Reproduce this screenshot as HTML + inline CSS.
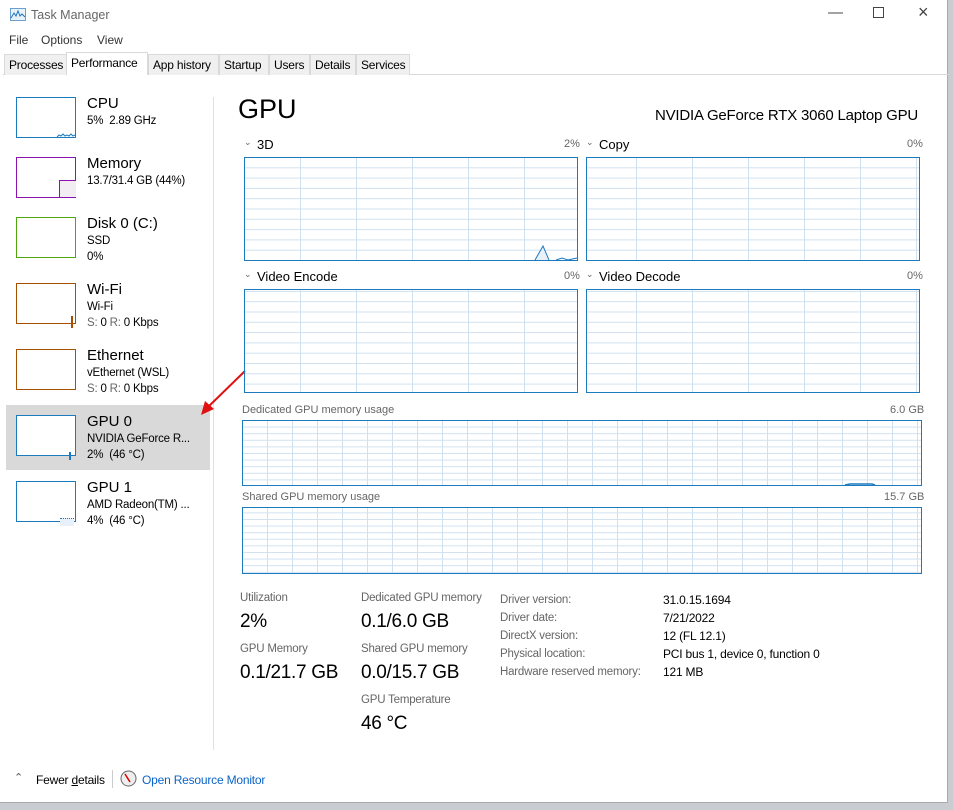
<!DOCTYPE html>
<html><head><meta charset="utf-8"><style>
*{margin:0;padding:0;box-sizing:border-box}
body{width:953px;height:810px;overflow:hidden;background:#c9ccd1;font-family:"Liberation Sans",sans-serif;font-size:12px;color:#000;position:relative}
.a{position:absolute;white-space:nowrap}
#win{position:absolute;left:0;top:0;width:948px;height:803px;background:#fff;border-right:1px solid #aaa;border-bottom:1px solid #aaa}
.tab{position:absolute;top:54px;height:21px;background:#f0f0f0;border:1px solid #d9d9d9;border-bottom:none;font-size:12px;padding:3px 4px 0;letter-spacing:-0.2px}
.th{position:absolute;left:16px;width:60px;height:41px;background:#fff}
.t1{position:absolute;left:87px;font-size:15px}
.t2{position:absolute;left:87px;font-size:11.5px;line-height:16px;letter-spacing:-0.2px}
.g{color:#666}
.lbl{font-size:11.5px;color:#666;letter-spacing:-0.2px}
.big{font-size:19px;letter-spacing:-0.3px}
</style></head><body>
<div id="win">
<svg class="a" style="left:10px;top:8px" width="16" height="13"><rect x="0.5" y="0.5" width="15" height="12" fill="#e8f2fb" stroke="#6a9fd0"/><path d="M1 10 L4 5 L6 8 L8 3 L10 8 L12 6 L15 9" stroke="#1e73be" fill="none"/></svg>
<div class="a" style="left:31px;top:8px;font-size:12.5px;color:#666">Task Manager</div>
<div class="a" style="left:828px;top:4px;font-size:15px;color:#444">&#8212;</div>
<div class="a" style="left:873px;top:7px;width:11px;height:11px;border:1px solid #444"></div>
<div class="a" style="left:918px;top:2px;font-size:18px;color:#444">&#215;</div>
<div class="a" style="left:9px;top:33px;color:#333">File</div>
<div class="a" style="left:41px;top:33px;color:#333">Options</div>
<div class="a" style="left:97px;top:33px;color:#333">View</div>
<div class="a" style="left:3px;top:74px;width:945px;height:1px;background:#d9d9d9"></div>
<div class="tab" style="left:4px;width:63px">Processes</div>
<div class="tab" style="left:66px;width:82px;top:52px;height:23px;background:#fff">Performance</div>
<div class="tab" style="left:148px;width:71px">App history</div>
<div class="tab" style="left:219px;width:50px">Startup</div>
<div class="tab" style="left:269px;width:41px">Users</div>
<div class="tab" style="left:310px;width:46px">Details</div>
<div class="tab" style="left:356px;width:54px">Services</div>

<div class="a" style="left:213px;top:97px;width:1px;height:653px;background:#e0e0e0"></div>
<div class="a" style="left:6px;top:405px;width:204px;height:65px;background:#d9d9d9"></div>

<div class="th" style="top:97px;border:1px solid #1c7bbf"></div>
<svg class="a" style="left:56px;top:128px" width="20" height="10"><path d="M1 9 L3 7 L5 8 L7 6 L9 8 L11 7 L13 8 L15 6 L17 8 L19 7" stroke="#1c7bbf" fill="#e8f1f9"/></svg>
<div class="t1" style="top:95px">CPU</div><div class="t2" style="top:113px">5% &nbsp;2.89 GHz</div>

<div class="th" style="top:157px;border:1px solid #8b12ae"></div>
<div class="a" style="left:59px;top:180px;width:17px;height:17px;border:1px solid #8b12ae;background:#f1edf2;border-right:none;border-bottom:none"></div>
<div class="t1" style="top:155px">Memory</div><div class="t2" style="top:173px">13.7/31.4 GB (44%)</div>

<div class="th" style="top:217px;border:1px solid #4da60c"></div>
<div class="t1" style="top:215px">Disk 0 (C:)</div><div class="t2" style="top:233px">SSD<br>0%</div>

<div class="th" style="top:283px;border:1px solid #a74f01"></div>
<div class="a" style="left:71px;top:316px;width:2px;height:12px;background:#a74f01"></div>
<div class="t1" style="top:281px">Wi-Fi</div><div class="t2" style="top:299px">Wi-Fi<br><span class="g">S:</span> 0 <span class="g">R:</span> 0 Kbps</div>

<div class="th" style="top:349px;border:1px solid #a74f01"></div>
<div class="t1" style="top:347px">Ethernet</div><div class="t2" style="top:365px">vEthernet (WSL)<br><span class="g">S:</span> 0 <span class="g">R:</span> 0 Kbps</div>

<div class="th" style="top:415px;border:1px solid #1c7bbf"></div>
<div class="a" style="left:69px;top:452px;width:2px;height:8px;background:#1c7bbf"></div>
<div class="t1" style="top:413px">GPU 0</div><div class="t2" style="top:431px">NVIDIA GeForce R...<br>2% &nbsp;(46 °C)</div>

<div class="th" style="top:481px;border:1px solid #1c7bbf"></div>
<div class="a" style="left:60px;top:518px;width:14px;height:8px;border-top:1px dotted #1c7bbf;background:#e8f1f9"></div>
<div class="t1" style="top:479px">GPU 1</div><div class="t2" style="top:497px">AMD Radeon(TM) ...<br>4% &nbsp;(46 °C)</div>

<svg class="a" style="left:195px;top:368px" width="55" height="50"><line x1="50" y1="3" x2="12" y2="40" stroke="#e01010" stroke-width="2"/><path d="M6 47 L10 33 L19 41 Z" fill="#e01010"/></svg>

<div class="a" style="left:238px;top:94px;font-size:27px">GPU</div>
<div class="a" style="left:655px;top:107px;font-size:15px;letter-spacing:-0.2px">NVIDIA GeForce RTX 3060 Laptop GPU</div>

<svg class="a" style="left:0;top:0" width="948" height="600">
<defs>
<pattern id="p" x="244" y="157" width="56" height="10.3" patternUnits="userSpaceOnUse"><path d="M0.5 0 V10.3 M0 0.5 H56" stroke="#cfe1f0" stroke-width="1" fill="none"/></pattern>
<pattern id="q" x="242" y="420" width="25" height="6.6" patternUnits="userSpaceOnUse"><path d="M0.5 0 V6.6 M0 0.5 H25" stroke="#cfe1f0" stroke-width="1" fill="none"/></pattern>
</defs>
<g stroke="#1c7bbf" stroke-width="1">
<rect x="244.5" y="157.5" width="333" height="103" fill="url(#p)"/>
<rect x="586.5" y="157.5" width="333" height="103" fill="url(#p)"/>
<rect x="244.5" y="289.5" width="333" height="103" fill="url(#p)"/>
<rect x="586.5" y="289.5" width="333" height="103" fill="url(#p)"/>
<rect x="242.5" y="420.5" width="679" height="65" fill="url(#q)"/>
<rect x="242.5" y="507.5" width="679" height="66" fill="url(#q)"/>
</g>
<path d="M535 260 L543 246 L549 260 M556 260 L562 258 L568 260 L577 258" stroke="#1c7bbf" fill="#e8f1f9"/>
<path d="M845 485 L850 484 L872 484 L875 485" stroke="#1c7bbf" stroke-width="1.5" fill="none"/>
</svg>

<div class="a" style="left:244px;top:137px;font-size:9px;color:#666">&#8964;</div>
<div class="a" style="left:257px;top:137px;font-size:13px">3D</div>
<div class="a" style="left:564px;top:138px;color:#666;font-size:11px">2%</div>
<div class="a" style="left:586px;top:137px;font-size:9px;color:#666">&#8964;</div>
<div class="a" style="left:599px;top:137px;font-size:13px">Copy</div>
<div class="a" style="left:907px;top:138px;color:#666;font-size:11px">0%</div>
<div class="a" style="left:244px;top:269px;font-size:9px;color:#666">&#8964;</div>
<div class="a" style="left:257px;top:269px;font-size:13px">Video Encode</div>
<div class="a" style="left:564px;top:270px;color:#666;font-size:11px">0%</div>
<div class="a" style="left:586px;top:269px;font-size:9px;color:#666">&#8964;</div>
<div class="a" style="left:599px;top:269px;font-size:13px">Video Decode</div>
<div class="a" style="left:907px;top:270px;color:#666;font-size:11px">0%</div>
<div class="a" style="left:242px;top:404px;font-size:11px;color:#666">Dedicated GPU memory usage</div>
<div class="a" style="left:890px;top:404px;font-size:11px;color:#666">6.0 GB</div>
<div class="a" style="left:242px;top:491px;font-size:11px;color:#666">Shared GPU memory usage</div>
<div class="a" style="left:884px;top:491px;font-size:11px;color:#666">15.7 GB</div>

<div class="a lbl" style="left:240px;top:592px">Utilization</div>
<div class="a big" style="left:240px;top:611px">2%</div>
<div class="a lbl" style="left:240px;top:643px">GPU Memory</div>
<div class="a big" style="left:240px;top:662px">0.1/21.7 GB</div>
<div class="a lbl" style="left:361px;top:592px">Dedicated GPU memory</div>
<div class="a big" style="left:361px;top:611px">0.1/6.0 GB</div>
<div class="a lbl" style="left:361px;top:643px">Shared GPU memory</div>
<div class="a big" style="left:361px;top:662px">0.0/15.7 GB</div>
<div class="a lbl" style="left:361px;top:694px">GPU Temperature</div>
<div class="a big" style="left:361px;top:713px">46 °C</div>
<div class="a lbl" style="left:500px;top:591px;line-height:18px">Driver version:<br>Driver date:<br>DirectX version:<br>Physical location:<br>Hardware reserved memory:</div>
<div class="a" style="left:663px;top:591px;line-height:18px;letter-spacing:-0.2px">31.0.15.1694<br>7/21/2022<br>12 (FL 12.1)<br>PCI bus 1, device 0, function 0<br>121 MB</div>

<div class="a" style="left:14px;top:771px;font-size:11px;color:#555">&#8963;</div>
<div class="a" style="left:36px;top:773px;letter-spacing:-0.2px"><span>Fewer <u>d</u>etails</span></div>
<div class="a" style="left:112px;top:770px;width:1px;height:18px;background:#ccc"></div>
<svg class="a" style="left:120px;top:770px" width="17" height="17"><circle cx="8.5" cy="8.5" r="7.5" fill="#eee" stroke="#666"/><line x1="5" y1="4" x2="10" y2="12" stroke="#d00" stroke-width="1.5"/></svg>
<div class="a" style="left:142px;top:773px;color:#0a64c8;letter-spacing:-0.2px">Open Resource Monitor</div>
</div>
</body></html>
